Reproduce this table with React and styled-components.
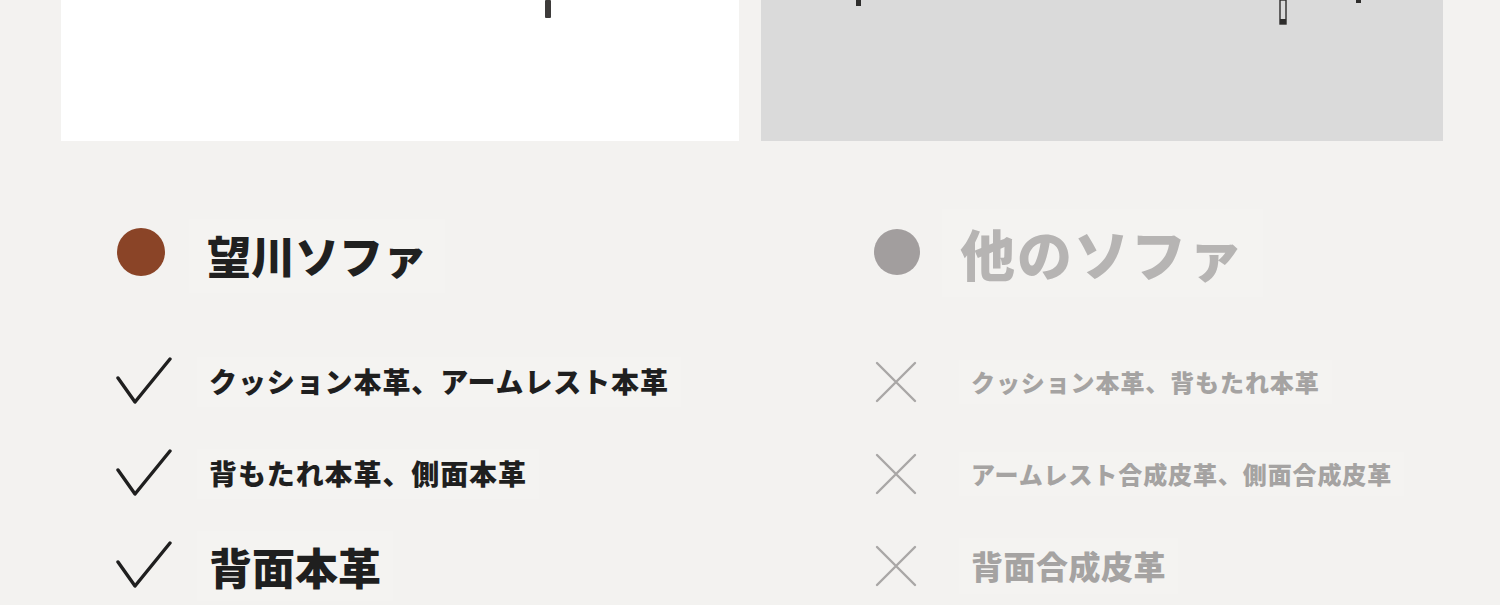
import React from "react";
import styled, { createGlobalStyle } from "styled-components";

const Global = createGlobalStyle`
  html, body { margin: 0; padding: 0; background: #f3f2f0; }
  body { font-family: "Noto Sans CJK JP", "Noto Sans", sans-serif; overflow: hidden; }
`;

const Page = styled.div`
  width: 1500px;
  height: 605px;
  background: #f3f2f0;
  overflow: hidden;
`;

const Photos = styled.div`
  display: grid;
  grid-template-columns: 678px 682px;
  gap: 22px;
  padding-left: 61px;
  height: 141px;
`;

const Photo = styled.div`
  background: ${(p) => p.$bg};
  height: 141px;
  overflow: hidden;
  svg { display: block; }
`;

const Compare = styled.div`
  display: grid;
  grid-template-columns: 757px 1fr;
  padding-left: 114px;
  margin-top: 67px;
`;

const Column = styled.div`
  display: flex;
  flex-direction: column;
`;

const TitleRow = styled.div`
  display: flex;
  align-items: center;
  height: 88px;
  margin-bottom: 40px;
`;

const Dot = styled.span`
  width: ${(p) => p.$size}px;
  height: ${(p) => p.$size}px;
  border-radius: 50%;
  background: ${(p) => p.$color};
  margin-left: 3px;
  flex: none;
`;

const Title = styled.h2`
  margin: ${(p) => p.$shift}px 0 0 ${(p) => p.$gap}px;
  padding: 8px 18px;
  font-size: ${(p) => p.$size}px;
  font-weight: 900;
  letter-spacing: ${(p) => p.$ls || 0}px;
  line-height: 1.3;
  color: ${(p) => p.$color};
  background: rgba(255, 255, 255, 0.12);
  white-space: nowrap;
`;

const Row = styled.div`
  display: flex;
  align-items: center;
  height: 92px;
`;

const IconBox = styled.span`
  width: ${(p) => p.$w}px;
  padding-left: ${(p) => p.$pad || 0}px;
  box-sizing: border-box;
  flex: none;
  display: flex;
  align-items: center;
  svg { display: block; }
`;

const Label = styled.span`
  font-size: ${(p) => p.$size}px;
  font-weight: 900;
  letter-spacing: ${(p) => p.$ls || 0}px;
  line-height: 1.35;
  color: ${(p) => p.$color};
  padding: 6px 12px;
  margin-left: -12px;
  background: rgba(255, 255, 255, 0.12);
  white-space: nowrap;
`;

const Check = () => (
  <svg width="60" height="50" viewBox="0 0 60 50">
    <path d="M3 21 L20 45 L55 2" fill="none" stroke="#1f1f1f" strokeWidth="3.4" strokeLinecap="round" strokeLinejoin="round" />
  </svg>
);

const Cross = () => (
  <svg width="42" height="42" viewBox="0 0 42 42">
    <path d="M2 2 L40 40 M40 2 L2 40" fill="none" stroke="#a9a7a6" strokeWidth="2.4" strokeLinecap="round" />
  </svg>
);

const LeftLegs = () => (
  <svg width="678" height="141" viewBox="0 0 678 141">
    <rect x="484" y="0" width="6" height="18" rx="1" fill="#3d3b3a" />
  </svg>
);

const RightLegs = () => (
  <svg width="682" height="141" viewBox="0 0 682 141">
    <rect x="95" y="0" width="5" height="6" fill="#2e2d2c" />
    <rect x="519" y="0" width="6" height="24" fill="none" stroke="#2e2d2c" strokeWidth="1.4" />
    <rect x="519" y="19" width="6" height="5" fill="#2e2d2c" />
    <rect x="595" y="0" width="5" height="3" fill="#2e2d2c" />
  </svg>
);

const good = [
  { text: "クッション本革、アームレスト本革", size: 28, ls: 0.9 },
  { text: "背もたれ本革、側面本革", size: 28, ls: 0.9 },
  { text: "背面本革", size: 43, ls: 0 },
];

const bad = [
  { text: "クッション本革、背もたれ本革", size: 24, ls: 0.9 },
  { text: "アームレスト合成皮革、側面合成皮革", size: 24, ls: 0.9 },
  { text: "背面合成皮革", size: 32, ls: 0.5 },
];

export default function App() {
  return (
    <Page>
      <Global />
      <Photos>
        <Photo $bg="#ffffff"><LeftLegs /></Photo>
        <Photo $bg="#dadada"><RightLegs /></Photo>
      </Photos>
      <Compare>
        <Column>
          <TitleRow>
            <Dot $size={48} $color="#8a4427" />
            <Title $gap={24} $shift={8} $size={44} $color="#202020">望川ソファ</Title>
          </TitleRow>
          {good.map((g) => (
            <Row key={g.text}>
              <IconBox $w={95} $pad={1}><Check /></IconBox>
              <Label $size={g.size} $ls={g.ls} $color="#1f1f1f">{g.text}</Label>
            </Row>
          ))}
        </Column>
        <Column>
          <TitleRow>
            <Dot $size={46} $color="#a29e9e" />
            <Title $gap={22} $shift={2} $size={55} $ls={2} $color="#b6b4b3">他のソファ</Title>
          </TitleRow>
          {bad.map((b) => (
            <Row key={b.text}>
              <IconBox $w={100} $pad={4}><Cross /></IconBox>
              <Label $size={b.size} $ls={b.ls} $color="#a5a3a2">{b.text}</Label>
            </Row>
          ))}
        </Column>
      </Compare>
    </Page>
  );
}
